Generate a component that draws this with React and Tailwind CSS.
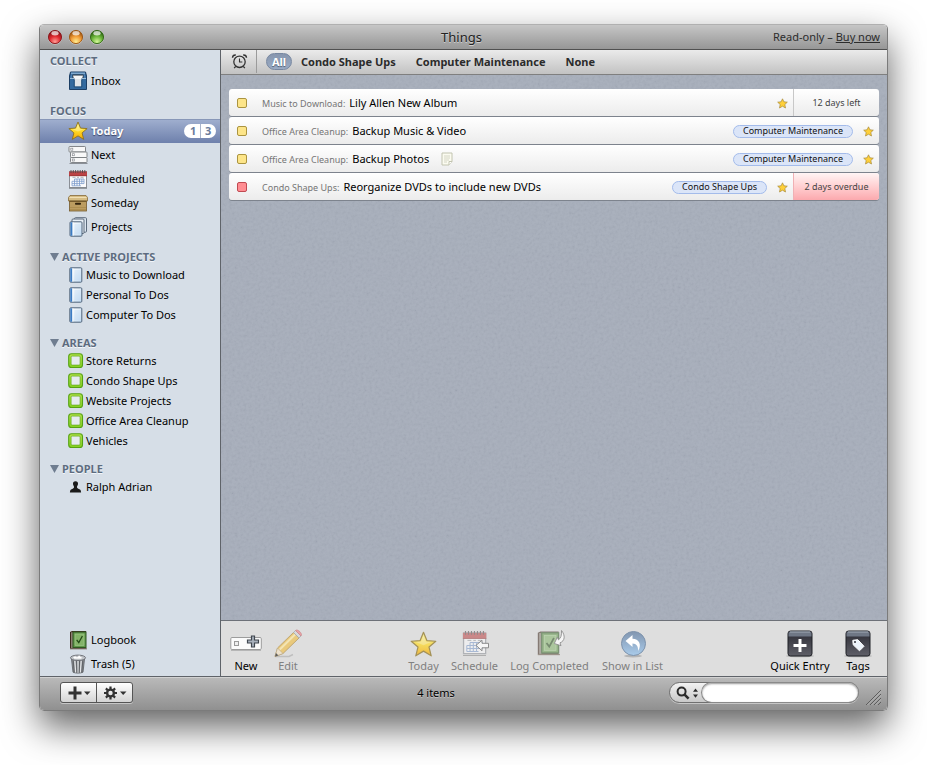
import React from "react";

function TrafficLight({ label, dark, mid, light }) {
  const id = "light-" + label;
  return (
    <button type="button" aria-label={label} className="size-4">
      <svg viewBox="0 0 16 16" className="size-4">
        <defs>
          <radialGradient id={id} cx="0.5" cy="0.85" r="0.75">
            <stop offset="0" stopColor={light} />
            <stop offset="0.55" stopColor={mid} />
            <stop offset="1" stopColor={dark} />
          </radialGradient>
        </defs>
        <circle cx="8" cy="8.6" r="7.2" fill="#fff" opacity="0.35" />
        <circle cx="8" cy="8" r="6.6" fill={`url(#${id})`} stroke={dark} strokeWidth="0.9" />
        <ellipse cx="8" cy="4.2" rx="3.6" ry="2.2" fill="#fff" opacity="0.7" />
      </svg>
    </button>
  );
}

function InboxIcon() {
  return (
    <svg viewBox="0 0 20 20" className="size-5">
      <path d="M2.500 1h15l1 4v13.500h-17V5z" fill="#2d5e90" stroke="#1c3e64" />
      <path d="M3 1.500h14v1.800H3z" fill="#7fa9cf" />
      <path d="M3 3.300h14l1 4H2z" fill="#4a7fb2" />
      <path d="M4.500 3.500h11v3.500h-11z" fill="#1d2935" />
      <path d="M5 4.500h10L13.800 9H6.200z" fill="#f4f6f8" />
      <path d="M2 7.500h4.200V12h7.600V7.500H18v10.500H2z" fill="#336a9f" />
      <path d="M6.700 8h6.600v7.500H6.700z" fill="#dfe4e8" />
      <path d="M6.200 7.500v8.500h7.600V7.500" fill="none" stroke="#1f486f" strokeWidth="0.8" />
      <path d="M2 7.500h4M14 7.500h4" stroke="#a6c5e0" strokeWidth="0.9" />
    </svg>
  );
}

function StarIcon({ className, faded }) {
  return (
    <svg viewBox="0 0 20 20" className={className} opacity={faded ? 0.7 : 1}>
      <defs>
        <linearGradient id="star-fill" x1="0" y1="0" x2="0" y2="1">
          <stop offset="0" stopColor="#fff58a" />
          <stop offset="0.5" stopColor="#ffdc28" />
          <stop offset="1" stopColor="#f7a600" />
        </linearGradient>
      </defs>
      <path
        d="M10 1l2.500 6.100 6.600.5-5 4.300 1.600 6.500L10 14.900l-5.700 3.500 1.600-6.500-5-4.300 6.600-.5z"
        fill="url(#star-fill)"
        stroke="#8c7220"
        strokeWidth="0.9"
        strokeLinejoin="round"
      />
      <path d="M10 3.500l1.800 4.300 3.800.4-5.600 2.300-5.600-2.300 3.800-.4z" fill="#fff" opacity="0.3" />
    </svg>
  );
}

function TinyStar() {
  return (
    <svg viewBox="0 0 11 11" className="size-[11px] shrink-0" role="img" aria-label="Starred">
      <path
        d="M5.500.8l1.400 3 3.400.4-2.500 2.300.7 3.500-3-1.800-3 1.800.7-3.500L.7 4.200l3.400-.4z"
        fill="#ffd039"
        stroke="#a88a3a"
        strokeWidth="0.700"
      />
    </svg>
  );
}

function NextIcon() {
  return (
    <svg viewBox="0 0 20 20" className="size-5">
      <g fill="#f8f8f8" stroke="#777a7e" strokeWidth="0.9">
        <rect x="1" y="1.500" width="16.500" height="5.500" rx="0.8" />
        <rect x="2.500" y="7" width="16.500" height="5.500" rx="0.8" />
        <rect x="2.500" y="12.500" width="16.500" height="5" rx="0.8" />
      </g>
      <g fill="#fff" stroke="#8d9095" strokeWidth="0.7">
        <rect x="2.800" y="3.200" width="2" height="2" />
        <rect x="4.300" y="8.700" width="2" height="2" />
        <rect x="4.300" y="14" width="2" height="2" />
      </g>
      <path d="M1.500 18.500h18" stroke="#8a8f96" />
    </svg>
  );
}

function CalendarArt() {
  return (
    <g>
      <rect x="1.500" y="2.500" width="17" height="16" fill="#fbfbfc" stroke="#8b8f96" />
      <path d="M1 2.500h18v4.500H1z" fill="#bb4345" />
      <path d="M1 6.800h18" stroke="#8d2a2d" strokeWidth="0.6" />
      <path d="M3 1v3M5.300 1v3M7.600 1v3M9.900 1v3M12.200 1v3M14.500 1v3M16.800 1v3" stroke="#55474a" strokeWidth="0.9" />
      <path d="M4.500 8.300h3m1.500 0h2m1.500 0h3" stroke="#8b8f96" strokeWidth="0.7" />
      <path
        d="M6.500 10h9.500M4 12.300h12M4 14.600h12M4 16.800h9M4 12.300v4.500M6.500 10v6.800M9 10v6.800M11.500 10v6.800M13.800 10v4.600M16 10v4.600"
        stroke="#7c9ccc"
        strokeWidth="0.8"
        fill="none"
      />
    </g>
  );
}

function CalendarIcon() {
  return (
    <svg viewBox="0 0 20 20" className="size-5">
      <CalendarArt />
      <path d="M1 19.300h18" stroke="#6f7379" strokeWidth="0.8" />
    </svg>
  );
}

function BoxIcon() {
  return (
    <svg viewBox="0 0 20 20" className="size-5">
      <path d="M2 2.500h16l1.500 2v3.500H.5V4.500z" fill="#d6bd84" stroke="#85693a" strokeWidth="0.8" />
      <path d="M1.500 4.500h17" stroke="#f0dfb4" />
      <rect x="1.500" y="8" width="17" height="10" fill="#bb9c60" stroke="#745a2c" strokeWidth="0.8" />
      <path d="M1.500 8.500h17" stroke="#745a2c" />
      <rect x="7" y="9.800" width="6" height="2" rx="0.8" fill="#33240d" />
      <path d="M2 14.500h16M2 16.500h16" stroke="#a98a4c" strokeWidth="0.8" />
    </svg>
  );
}

function PageArt() {
  return (
    <g>
      <defs>
        <linearGradient id="page-fill" x1="0" y1="0" x2="1" y2="1">
          <stop offset="0" stopColor="#ffffff" />
          <stop offset="1" stopColor="#c3dcf3" />
        </linearGradient>
      </defs>
      <rect x="0.800" y="0.800" width="12" height="14.400" rx="1" fill="url(#page-fill)" stroke="#4f6379" />
      <path d="M1.300 1.300h2v13.400h-2z" fill="#3b7cc4" />
      <path d="M3.500 1.300h0.800v13.400h-0.800z" fill="#fff" />
      <path d="M5.500 4h6M5.500 6h6M5.500 8h6M5.500 10h6M5.500 12h6" stroke="#b7d2ec" strokeWidth="0.5" />
    </g>
  );
}

function ProjectIcon() {
  return (
    <svg viewBox="-1 0 16 16" className="size-4">
      <PageArt />
    </svg>
  );
}

function ProjectsIcon() {
  return (
    <svg viewBox="0 0 20 20" className="size-5">
      <rect x="6.500" y="0.700" width="12" height="14.500" rx="1" fill="#dce6f0" stroke="#5c6b7c" />
      <rect x="4" y="2" width="12" height="14.500" rx="1" fill="#e8eff6" stroke="#5c6b7c" />
      <g transform="translate(1.200 4)">
        <PageArt />
      </g>
    </svg>
  );
}

function AreaIcon() {
  return (
    <svg viewBox="0 0 16 16" className="size-4">
      <defs>
        <linearGradient id="area-fill" x1="0" y1="0" x2="0" y2="1">
          <stop offset="0" stopColor="#b2e24a" />
          <stop offset="1" stopColor="#83d021" />
        </linearGradient>
      </defs>
      <rect x="0.700" y="0.700" width="13.800" height="13.800" rx="2.800" fill="url(#area-fill)" stroke="#56a214" strokeWidth="1.100" />
      <rect x="3.100" y="3.100" width="9" height="9" rx="1" fill="#e6ebf1" stroke="#62a91b" strokeWidth="0.700" />
    </svg>
  );
}

function PersonIcon() {
  return (
    <svg viewBox="0 0 16 16" className="size-4">
      <path
        d="M7.500 2.200c1.800 0 2.700 1.200 2.500 2.900-.1 1.200-.8 1.800-1 2.700-.1.900.3 1.500 1.300 1.900 1.700.6 2.700.9 2.800 3.900H1.900c.1-3 1.100-3.300 2.800-3.900 1-.4 1.400-1 1.300-1.900-.2-.9-.9-1.500-1-2.700-.2-1.700.7-2.900 2.500-2.900z"
        fill="#1a1a1a"
      />
    </svg>
  );
}

function BookArt() {
  return (
    <g>
      <path d="M2 2l2-1h14v17.500H2z" fill="#3d2a1e" />
      <path d="M3 2.200h2v16H3z" fill="#8b7f74" />
      <rect x="5" y="2" width="13" height="15.500" fill="#5f9648" stroke="#2f5722" />
      <rect x="7" y="4" width="9" height="11.500" fill="#83b368" stroke="#a4cb8f" strokeWidth="0.600" />
      <path d="M8.700 9.800l2.100 2.800L14.400 6" fill="none" stroke="#244a18" strokeWidth="1.300" />
      <path d="M2 18.800h17" stroke="#5b4636" strokeWidth="0.800" />
    </g>
  );
}

function LogbookIcon() {
  return (
    <svg viewBox="0 0 20 20" className="size-5">
      <BookArt />
    </svg>
  );
}

function TrashIcon() {
  return (
    <svg viewBox="0 0 20 20" className="size-5">
      <path d="M3.500 5h13L15 18.200c-2.500 1.200-7.500 1.200-10 0z" fill="#8b8e92" stroke="#5b5e62" strokeWidth="0.800" />
      <path d="M6.800 6.500l.8 12M10 6.500v12.300M13.200 6.500l-.8 12" stroke="#e4e6e8" strokeWidth="1.300" />
      <path d="M5.200 6.500l1 11.500M8.500 6.500l.4 12M11.600 6.500l-.4 12M14.800 6.500l-1 11.500" stroke="#4c4f53" strokeWidth="0.700" />
      <ellipse cx="10" cy="3.800" rx="7.500" ry="2.700" fill="#c9ccd0" stroke="#66696e" strokeWidth="0.900" />
      <path d="M4.500 3.600L7 1.800l2 1.200 2.200-1.700 2 1.600 2.400.8-2.600 1.400H6.500z" fill="#fff" stroke="#a1a5aa" strokeWidth="0.500" />
    </svg>
  );
}

function NoteIcon() {
  return (
    <svg viewBox="0 0 12 14" className="ml-3 h-3.5 w-3 shrink-0" role="img" aria-label="Has a note">
      <path d="M1 1h10v8.500L8 13H1z" fill="#fbfbf0" stroke="#c2c4b0" />
      <path d="M11 9.500H8V13" fill="#fff" stroke="#c2c4b0" />
      <path d="M3 4h6M3 6h6M3 8h5M3 10h3" stroke="#cfd0c0" strokeWidth="0.900" />
    </svg>
  );
}

function AlarmIcon() {
  return (
    <svg viewBox="0 0 17 17" className="size-[17px]" fill="none" stroke="#333">
      <circle cx="8.500" cy="8.800" r="5.700" strokeWidth="1.300" />
      <path d="M8.500 5.600v3.400h2.800" strokeWidth="1.100" />
      <path d="M1.500 4.800C1.600 3 2.900 1.900 4.800 2M15.500 4.800C15.400 3 14.100 1.900 12.200 2" strokeWidth="1.400" />
      <path d="M4.700 13.300l-1.500 1.900M12.300 13.300l1.500 1.900" strokeWidth="1.300" />
    </svg>
  );
}

function NewIcon() {
  return (
    <svg viewBox="0 0 32 32" className="size-8">
      <rect x="0.800" y="9.500" width="30.500" height="12" rx="1.200" fill="#fbfbfb" stroke="#9c9c9c" />
      <path d="M1 22.500h30" stroke="#b6b6b6" />
      <rect x="4.500" y="13.500" width="4" height="4" fill="#eee" stroke="#9a9a9a" />
      <path d="M21.500 8h3v4h4v3h-4v4h-3v-4h-4v-3h4z" fill="#a8b1bc" stroke="#41474f" strokeWidth="1.200" />
    </svg>
  );
}

function PencilIcon() {
  return (
    <svg viewBox="0 0 32 32" className="size-8" opacity="0.75">
      <path d="M3 28.500h14l4-2" stroke="#b5b5b5" strokeWidth="1.500" fill="none" />
      <path d="M3 28.500l2.500-8.500L21.500 4.500l5.500 5.500L11 25.500z" fill="#edc35c" stroke="#a8843b" strokeWidth="0.800" />
      <path d="M7.500 21.800L23.300 6.300" stroke="#fbe7a6" strokeWidth="2" />
      <path d="M3 28.500l2.500-8.500 5.500 5.500z" fill="#f3e3c6" stroke="#a8936a" strokeWidth="0.600" />
      <path d="M3 28.500l1-3.400 2.400 2.400z" fill="#333" />
      <path d="M21.500 4.500l2-2 5.500 5.500-2 2z" fill="#d5d8dc" stroke="#8e9297" strokeWidth="0.700" />
      <path d="M23.500 2.500c1.800-2.200 7.700 3.300 5.500 5.500z" fill="#ef8d92" stroke="#c06a6f" strokeWidth="0.700" />
    </svg>
  );
}

function BigStarIcon() {
  return (
    <span className="flex size-8 items-center justify-center">
      <StarIcon className="size-[27px]" faded />
    </span>
  );
}

function ScheduleIcon() {
  return (
    <svg viewBox="0 0 32 32" className="size-8">
      <g opacity="0.55">
        <g transform="translate(2.600 1.600) scale(1.300)">
          <CalendarArt />
        </g>
        <path d="M4 27.500h23" stroke="#888" />
      </g>
      <path d="M17 17.300l6-5v3h6.500v4.500H23v3z" fill="#f6f6f6" stroke="#8b8b8b" />
    </svg>
  );
}

function LogCompletedIcon() {
  return (
    <svg viewBox="0 0 32 32" className="size-8">
      <g opacity="0.55" transform="translate(1.200 2.200) scale(1.300)">
        <BookArt />
      </g>
      <path
        d="M27.500 2.500c4 5 3.500 10.500-1.500 12.300l1 2.900-6.700-2.200 3-6.300 1.200 2.600c2.300-1.500 3.300-4.500 3-9.300z"
        fill="#f6f6f6"
        stroke="#8f8f8f"
        strokeWidth="0.900"
      />
    </svg>
  );
}

function ShowInListIcon() {
  return (
    <svg viewBox="0 0 32 32" className="size-8">
      <defs>
        <linearGradient id="show-fill" x1="0" y1="0" x2="0" y2="1">
          <stop offset="0" stopColor="#8296b0" />
          <stop offset="1" stopColor="#a9cbea" />
        </linearGradient>
      </defs>
      <ellipse cx="16" cy="28" rx="9" ry="1.500" fill="#b5b5b5" />
      <circle cx="16.500" cy="15.500" r="12" fill="url(#show-fill)" stroke="#7e93ac" />
      <path d="M8.500 13l7-6v3.800c6.500.2 9.500 5.700 5.700 12.200 0-4.800-1.700-7.400-5.700-7.500V19z" fill="#fff" />
    </svg>
  );
}

function DarkTile({ children }) {
  return (
    <svg viewBox="0 0 32 32" className="size-8">
      <defs>
        <linearGradient id="tile-fill" x1="0" y1="0" x2="0" y2="1">
          <stop offset="0" stopColor="#2b2b33" />
          <stop offset="1" stopColor="#5f5f68" />
        </linearGradient>
      </defs>
      <ellipse cx="16" cy="28" rx="14" ry="1.300" fill="#b5b5b5" />
      <rect x="4" y="3" width="24" height="25" rx="2.500" fill="url(#tile-fill)" stroke="#1f2026" />
      <path d="M6 3.500h20a1.500 1.500 0 0 1 1.500 1.500v3.500h-23V5A1.500 1.500 0 0 1 6 3.500z" fill="#6f7785" />
      <path d="M6 4h20" stroke="#a3acb8" />
      {children}
    </svg>
  );
}

function QuickEntryIcon() {
  return (
    <DarkTile>
      <path d="M14.500 11h3v5h5v3h-5v5h-3v-5h-5v-3h5z" fill="#fff" />
    </DarkTile>
  );
}

function TagsIcon() {
  return (
    <DarkTile>
      <path d="M10.800 12.300l5-.6 6.200 6.600-4.500 4.500-6.300-6z" fill="#edf3fb" stroke="#fff" strokeLinejoin="round" />
      <circle cx="13" cy="13.900" r="1" fill="#34343c" />
    </DarkTile>
  );
}

function SectionHeader({ children, collapsible }) {
  return (
    <h2 className="flex h-4 items-center gap-[3px] pl-2.5 text-[11px] leading-4 font-bold text-[#5d6c80] [text-shadow:0_1px_0_#f3f6fa]">
      {collapsible && (
        <svg viewBox="0 0 9 8" className="h-2 w-[9px]" aria-hidden="true">
          <path d="M0 0h9L4.500 8z" fill="#6f7d90" />
        </svg>
      )}
      {children}
    </h2>
  );
}

function BigItem({ icon, label, selected, children }) {
  return (
    <li>
      <button
        type="button"
        className={
          selected
            ? "flex h-6 w-full items-center gap-[3px] bg-linear-to-b from-[#a1b0d0] to-[#6e80ac] pr-1 pl-7 text-left font-bold text-white shadow-[inset_0_1px_0_#8797b8] [text-shadow:0_1px_1px_#3a4668]"
            : "flex h-6 w-full items-center gap-[3px] pr-1 pl-7 text-left"
        }
      >
        {icon}
        <span>{label}</span>
        {children}
      </button>
    </li>
  );
}

function SmallItem({ icon, label }) {
  return (
    <li>
      <button type="button" className="flex h-5 w-full items-center gap-0.5 pl-7 text-left">
        {icon}
        <span>{label}</span>
      </button>
    </li>
  );
}

function Sidebar() {
  return (
    <nav
      aria-label="Lists"
      className="flex w-[181px] shrink-0 flex-col border-r border-[#5f6369] bg-[#d6dee7] pt-[3px] text-[11px] leading-4 text-black"
    >
      <SectionHeader>COLLECT</SectionHeader>
      <ul className="mb-2.5">
        <BigItem icon={<InboxIcon />} label="Inbox" />
      </ul>
      <SectionHeader>FOCUS</SectionHeader>
      <ul className="mb-2.5">
        <BigItem icon={<StarIcon className="size-5" />} label="Today" selected>
          <span className="ml-auto flex h-3.5 items-center overflow-hidden rounded-full bg-white text-[11px] leading-[14px] text-[#6b7c9c] [text-shadow:none]">
            <span className="w-4 pl-1.5">1</span>
            <span className="w-4 border-l border-[#a9b4cb] pl-1">3</span>
          </span>
        </BigItem>
        <BigItem icon={<NextIcon />} label="Next" />
        <BigItem icon={<CalendarIcon />} label="Scheduled" />
        <BigItem icon={<BoxIcon />} label="Someday" />
        <BigItem icon={<ProjectsIcon />} label="Projects" />
      </ul>
      <SectionHeader collapsible>ACTIVE PROJECTS</SectionHeader>
      <ul className="mb-2.5">
        {["Music to Download", "Personal To Dos", "Computer To Dos"].map((name) => (
          <SmallItem key={name} icon={<ProjectIcon />} label={name} />
        ))}
      </ul>
      <SectionHeader collapsible>AREAS</SectionHeader>
      <ul className="mb-2.5">
        {["Store Returns", "Condo Shape Ups", "Website Projects", "Office Area Cleanup", "Vehicles"].map((name) => (
          <SmallItem key={name} icon={<AreaIcon />} label={name} />
        ))}
      </ul>
      <SectionHeader collapsible>PEOPLE</SectionHeader>
      <ul>
        <SmallItem icon={<PersonIcon />} label="Ralph Adrian" />
      </ul>
      <ul className="mt-auto">
        <BigItem icon={<LogbookIcon />} label="Logbook" />
        <BigItem icon={<TrashIcon />} label="Trash (5)" />
      </ul>
    </nav>
  );
}

const tasks = [
  { area: "Music to Download", title: "Lily Allen New Album", due: "12 days left" },
  { area: "Office Area Cleanup", title: "Backup Music & Video", tag: "Computer Maintenance" },
  { area: "Office Area Cleanup", title: "Backup Photos", tag: "Computer Maintenance", note: true },
  {
    area: "Condo Shape Ups",
    title: "Reorganize DVDs to include new DVDs",
    tag: "Condo Shape Ups",
    due: "2 days overdue",
    overdue: true,
  },
];

function TaskRow({ task, index }) {
  const id = "task-" + index;
  return (
    <li className="flex h-[27px] items-stretch overflow-hidden rounded-[3px] bg-linear-to-b from-white to-[#ececec] shadow-[0_1px_0_#7d838d]">
      <div className="flex min-w-0 flex-1 items-center pt-px pl-2 pr-[5px]">
        <input
          id={id}
          type="checkbox"
          className={
            task.overdue
              ? "size-2.5 shrink-0 appearance-none rounded-[2px] border border-[#c04a52] bg-[#ff8d92]"
              : "size-2.5 shrink-0 appearance-none rounded-[2px] border border-[#ab9440] bg-[#fde589]"
          }
        />
        <label htmlFor={id} className="flex items-baseline gap-1 pl-[15px] whitespace-nowrap">
          <span className="text-[9px] leading-4 text-[#757575]">{task.area}:</span>
          <span className="text-[11px] leading-4 text-black">{task.title}</span>
        </label>
        {task.note && <NoteIcon />}
        <div className="ml-auto flex items-center gap-2.5">
          {task.tag && (
            <span className="flex h-[13px] items-center rounded-full border border-[#a3bbea] bg-[#dbe5f8] px-[9px] text-[9px] leading-3 whitespace-nowrap text-[#111]">
              {task.tag}
            </span>
          )}
          <TinyStar />
        </div>
      </div>
      {task.due && (
        <div
          className={
            task.overdue
              ? "flex w-[86px] items-center justify-center border-l border-[#f0b0b4] bg-linear-to-b from-[#fff5f5] to-[#fba9ae] pt-px text-[9px] text-[#444]"
              : "flex w-[86px] items-center justify-center border-l border-[#c8c8c8] pt-px text-[9px] text-[#444]"
          }
        >
          {task.due}
        </div>
      )}
    </li>
  );
}

function FilterBar() {
  return (
    <div className="flex h-[25px] items-center border-b border-[#7f7f7f] bg-linear-to-b from-[#ebebeb] to-[#c2c2c2] pb-px text-[11px] leading-4 font-bold text-[#2b2b2b] [text-shadow:0_1px_0_#f2f2f2]">
      <button type="button" aria-label="Due dates" className="flex w-9 items-center justify-center self-stretch border-r border-[#9b9b9b] pl-px">
        <AlarmIcon />
      </button>
      <button
        type="button"
        className="ml-[9px] h-[17px] w-[26px] rounded-full border border-[#7787a0] bg-linear-to-b from-[#8796ae] to-[#9aabc4] text-center leading-[15px] text-white [text-shadow:0_1px_1px_#4d5a70]"
      >
        All
      </button>
      <div className="ml-[9px] flex gap-5 whitespace-nowrap">
        <button type="button">Condo Shape Ups</button>
        <button type="button">Computer Maintenance</button>
        <button type="button">None</button>
      </div>
    </div>
  );
}

function TaskArea() {
  return (
    <div className="relative flex-1 bg-[#a6adba] px-2 pt-3.5">
      <svg className="pointer-events-none absolute inset-0 size-full opacity-5" aria-hidden="true">
        <filter id="grain">
          <feTurbulence type="fractalNoise" baseFrequency="0.35" numOctaves="3" />
          <feColorMatrix type="matrix" values="1.500 0 0 0 -0.150 1.500 0 0 0 -0.150 1.500 0 0 0 -0.120 0 0 0 0 1" />
        </filter>
        <rect width="100%" height="100%" filter="url(#grain)" />
      </svg>
      <ul className="relative flex flex-col gap-px">
        {tasks.map((task, index) => (
          <TaskRow key={index} task={task} index={index} />
        ))}
      </ul>
    </div>
  );
}

function Tool({ icon, label, width, disabled }) {
  return (
    <button
      type="button"
      disabled={disabled}
      className={`flex flex-col items-center whitespace-nowrap ${width} ${disabled ? "text-[#808080]" : "text-black"}`}
    >
      {icon}
      <span className="text-[11px] leading-3">{label}</span>
    </button>
  );
}

function Toolbar() {
  return (
    <div role="toolbar" className="flex h-14 justify-between border-t border-[#6d7178] bg-[#dedede] pt-[7px] pr-[15px] pl-[9px]">
      <div className="flex gap-2.5">
        <Tool icon={<NewIcon />} label="New" width="w-8" />
        <Tool icon={<PencilIcon />} label="Edit" width="w-8" disabled />
      </div>
      <div className="flex gap-[11px]">
        <Tool icon={<BigStarIcon />} label="Today" width="w-8" disabled />
        <Tool icon={<ScheduleIcon />} label="Schedule" width="w-12" disabled />
        <Tool icon={<LogCompletedIcon />} label="Log Completed" width="w-20" disabled />
        <Tool icon={<ShowInListIcon />} label="Show in List" width="w-16" disabled />
      </div>
      <div className="flex gap-3">
        <Tool icon={<QuickEntryIcon />} label="Quick Entry" width="w-16" />
        <Tool icon={<TagsIcon />} label="Tags" width="w-7" />
      </div>
    </div>
  );
}

function BottomBar() {
  return (
    <footer className="flex h-[33px] items-center border-t border-[#d2d2d2] bg-linear-to-b from-[#b9b9b9] to-[#909090] pb-[3px]">
      <div className="w-[163px] pl-5">
        <div className="flex h-[21px] w-[73px] overflow-hidden rounded-[3px] border border-[#555] bg-linear-to-b from-white to-[#d4d4d4] shadow-[0_1px_0_#c6c6c6]">
          <button type="button" aria-label="Add" className="flex flex-1 items-center justify-center border-r border-[#555]">
            <svg viewBox="0 0 24 14" className="h-3.5 w-6" fill="#333">
              <path d="M6.500.5h3V5.500h5v3h-5v5h-3v-5h-5v-3h5zM17 5.500h6.500L20.200 9z" />
            </svg>
          </button>
          <button type="button" aria-label="Actions" className="flex flex-1 items-center justify-center">
            <svg viewBox="0 0 24 14" className="h-3.5 w-6" fill="none" stroke="#333">
              <circle cx="7.500" cy="7" r="3.400" strokeWidth="2.400" />
              <path
                d="M7.500.5v2.500M7.500 11v2.500M1 7h2.500M11.500 7H14M2.900 2.400l1.800 1.800M10.300 9.800l1.800 1.800M12.100 2.400l-1.800 1.800M4.700 9.800l-1.800 1.800"
                strokeWidth="2.200"
              />
              <path d="M17 5.500h6.500L20.200 9z" fill="#333" stroke="none" />
            </svg>
          </button>
        </div>
      </div>
      <p className="flex-1 text-center text-[11px] leading-4 text-black [text-shadow:0_1px_0_#c4c4c4]">4 items</p>
      <div className="flex w-[218px] items-center">
        <label
          htmlFor="search"
          className="flex h-[21px] w-[190px] items-center rounded-full border border-[#707070] bg-linear-to-b from-[#f2f2f2] to-[#c9c9c9] shadow-[0_1px_0_#c6c6c6]"
        >
          <svg viewBox="0 0 24 14" className="mr-0.5 ml-1.5 h-3.5 w-6 shrink-0" aria-hidden="true">
            <circle cx="5.600" cy="5.600" r="4" fill="none" stroke="#2b2b2b" strokeWidth="2" />
            <path d="M8.600 8.600l4 4" stroke="#2b2b2b" strokeWidth="2.600" />
            <path d="M17 5.800l2.500-3.300L22 5.800zM17 8.500l2.500 3.300L22 8.500z" fill="#2b2b2b" />
          </svg>
          <input
            id="search"
            type="text"
            aria-label="Search"
            className="h-[19px] w-full min-w-0 rounded-full bg-white px-2 text-[11px] shadow-[0_0_0_1px_#8a8a8a,inset_0_1px_2px_#999] outline-none"
          />
        </label>
        <svg viewBox="0 0 16 16" className="mt-2 mr-1.5 ml-auto size-4" aria-hidden="true">
          <path d="M1 16L16 1M5 16L16 5M9 16l7-7M13 16l3-3" stroke="#5d5d5d" />
          <path d="M2 16.500L16.500 2M6 16.500L16.500 6M10 16.500l6.500-6.500" stroke="#c8c8c8" strokeWidth="0.600" />
        </svg>
      </div>
    </footer>
  );
}

function TitleBar() {
  return (
    <header className="grid h-[25px] grid-cols-[1fr_auto_1fr] items-center border-b border-[#515151] bg-linear-to-b from-[#c6c6c6] to-[#979797]">
      <div className="flex gap-[5px] pl-[7px]">
        <TrafficLight label="Close" dark="#86151a" mid="#e0282e" light="#ff9d96" />
        <TrafficLight label="Minimize" dark="#9a5412" mid="#f09a35" light="#ffee92" />
        <TrafficLight label="Zoom" dark="#2f6613" mid="#6bb53a" light="#d4f79a" />
      </div>
      <h1 className="pr-1 text-[13px] leading-4 text-[#222] [text-shadow:0_1px_0_#d0d0d0]">Things</h1>
      <p className="pr-[7px] text-right text-[11px] leading-4 text-[#2c2c2c]">
        Read-only –{" "}
        <a href="#buy" className="underline">
          Buy now
        </a>
      </p>
    </header>
  );
}

export default function App() {
  return (
    <div className="flex min-h-screen bg-white px-[39px] pt-6 pb-[54px] font-['Lucida_Grande','Noto_Sans',sans-serif]">
      <main className="flex min-w-0 flex-1 flex-col overflow-hidden rounded-[5px] border border-[#7b7b7b] border-t-[#b0b0b0] shadow-[0_16px_36px_rgba(0,0,0,0.62)]">
        <TitleBar />
        <div className="flex flex-1 border-b border-[#5f6369]">
          <Sidebar />
          <section className="flex min-w-0 flex-1 flex-col">
            <FilterBar />
            <TaskArea />
            <Toolbar />
          </section>
        </div>
        <BottomBar />
      </main>
    </div>
  );
}
